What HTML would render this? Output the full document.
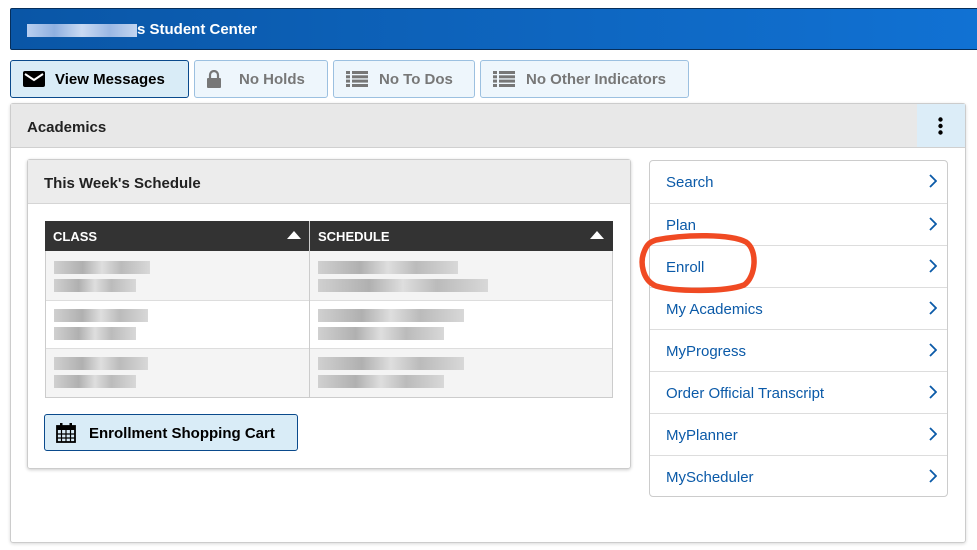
<!DOCTYPE html><html><head><style>
body{margin:0;width:977px;height:550px;background:#fff;font-family:"Liberation Sans",Arial,sans-serif;position:relative;overflow:hidden}
.a{position:absolute;box-sizing:border-box}
.hdr{left:10px;top:8px;width:980px;height:42px;background:linear-gradient(90deg,#0a56a6,#1172d4);border:1px solid #062f5c;border-radius:2px;color:#fff;font-size:15px;font-weight:bold;padding:12px 0 0 16px}
.btn{top:60px;height:38px;border:1px solid #9cc0e0;background:#eef6fc;border-radius:3px;font-size:15px;font-weight:bold;color:#777;display:flex;align-items:center}
.blur{display:inline-block;background:linear-gradient(90deg,#b9cff0,#8fb0e0,#c9daf3,#9bb8e4,#c3d5f0);height:13px;vertical-align:middle}
.g{position:absolute;height:13px;background:linear-gradient(90deg,#d0d0d0,#b0b0b0 30%,#dedede 50%,#bbb 70%,#d8d8d8)}
.li{position:absolute;left:0;width:100%;height:42px;border-top:1px solid #ddd;color:#0b5aa8;font-size:15px;padding:13px 0 0 16px;box-sizing:border-box}
.li:first-child{border-top:none}
.li svg{position:absolute;right:10px;top:13px}
</style></head><body>
<div class="a hdr"><span class="blur" style="width:110px;margin-right:0"></span>s Student Center</div>
<div class="a btn" style="left:10px;width:179px;background:#d9ecf7;border-color:#0a4a8c;color:#000;padding-left:12px"><svg width="22" height="18" viewBox="0 0 22 18"><rect x="0" y="1" width="22" height="16" rx="2" fill="#000"/><path d="M2 4l9 6 9-6" stroke="#fff" stroke-width="2" fill="none"/></svg><span style="margin-left:10px">View Messages</span></div>
<div class="a btn" style="left:194px;width:134px;padding-left:12px"><svg width="14" height="18" viewBox="0 0 14 18"><path d="M3 8V5a4 4 0 0 1 8 0v3" stroke="#777" stroke-width="2.2" fill="none"/><rect x="0" y="8" width="14" height="10" rx="1" fill="#777"/></svg><span style="margin-left:18px">No Holds</span></div>
<div class="a btn" style="left:333px;width:142px;padding-left:12px"><svg width="22" height="16" viewBox="0 0 22 16" fill="#777"><rect x="0" y="0" width="4" height="3"/><rect x="6" y="0" width="16" height="3"/><rect x="0" y="4.3" width="4" height="3"/><rect x="6" y="4.3" width="16" height="3"/><rect x="0" y="8.6" width="4" height="3"/><rect x="6" y="8.6" width="16" height="3"/><rect x="0" y="13" width="4" height="3"/><rect x="6" y="13" width="16" height="3"/></svg><span style="margin-left:11px">No To Dos</span></div>
<div class="a btn" style="left:480px;width:209px;padding-left:12px"><svg width="22" height="16" viewBox="0 0 22 16" fill="#777"><rect x="0" y="0" width="4" height="3"/><rect x="6" y="0" width="16" height="3"/><rect x="0" y="4.3" width="4" height="3"/><rect x="6" y="4.3" width="16" height="3"/><rect x="0" y="8.6" width="4" height="3"/><rect x="6" y="8.6" width="16" height="3"/><rect x="0" y="13" width="4" height="3"/><rect x="6" y="13" width="16" height="3"/></svg><span style="margin-left:11px">No Other Indicators</span></div>

<div class="a" style="left:10px;top:103px;width:956px;height:440px;border:1px solid #ccc;border-radius:3px;box-shadow:0 1px 3px rgba(0,0,0,.15)"></div>
<div class="a" style="left:11px;top:104px;width:906px;height:44px;background:#e8e8e8;border-bottom:1px solid #d0d0d0;font-size:15px;font-weight:bold;color:#222;padding:15px 0 0 16px">Academics</div>
<div class="a" style="left:917px;top:104px;width:48px;height:44px;background:#dcedf8;border-bottom:1px solid #d0d0d0"><svg style="position:absolute;left:21px;top:13px" width="5" height="18"><circle cx="2.5" cy="2.5" r="2.2"/><circle cx="2.5" cy="9" r="2.2"/><circle cx="2.5" cy="15.5" r="2.2"/></svg></div>

<div class="a" style="left:27px;top:159px;width:604px;height:310px;border:1px solid #ccc;border-radius:3px;box-shadow:0 1px 3px rgba(0,0,0,.2)"></div>
<div class="a" style="left:28px;top:160px;width:602px;height:44px;background:#ececec;border-bottom:1px solid #d5d5d5;font-size:15px;font-weight:bold;color:#222;padding:15px 0 0 16px">This Week's Schedule</div>
<div class="a" style="left:45px;top:221px;width:568px;height:177px;border:1px solid #ccc;background:#f4f4f4"></div>
<div class="a" style="left:45px;top:221px;width:568px;height:30px;background:#333"></div>
<div class="a" style="left:309px;top:221px;width:1px;height:177px;background:#ccc"></div>
<div class="a" style="left:53px;top:229px;color:#fff;font-size:13px;font-weight:bold">CLASS</div>
<div class="a" style="left:318px;top:229px;color:#fff;font-size:13px;font-weight:bold">SCHEDULE</div>
<svg class="a" style="left:287px;top:231px" width="14" height="8"><path d="M0 8L7 0 14 8z" fill="#fff"/></svg>
<svg class="a" style="left:590px;top:231px" width="14" height="8"><path d="M0 8L7 0 14 8z" fill="#fff"/></svg>
<div class="a" style="left:46px;top:300px;width:566px;height:49px;background:#fff;border-top:1px solid #ddd;border-bottom:1px solid #ddd"></div>
<div class="a" style="left:309px;top:300px;width:1px;height:49px;background:#ccc"></div>
<div class="g" style="left:54px;top:261px;width:96px"></div><div class="g" style="left:54px;top:279px;width:82px"></div>
<div class="g" style="left:318px;top:261px;width:140px"></div><div class="g" style="left:318px;top:279px;width:170px"></div>
<div class="g" style="left:54px;top:309px;width:94px"></div><div class="g" style="left:54px;top:327px;width:82px"></div>
<div class="g" style="left:318px;top:309px;width:146px"></div><div class="g" style="left:318px;top:327px;width:126px"></div>
<div class="g" style="left:54px;top:357px;width:94px"></div><div class="g" style="left:54px;top:375px;width:82px"></div>
<div class="g" style="left:318px;top:357px;width:146px"></div><div class="g" style="left:318px;top:375px;width:126px"></div>
<div class="a" style="left:44px;top:414px;width:254px;height:37px;background:#d9ecf7;border:1px solid #0a4a8c;border-radius:3px;font-size:15px;font-weight:bold;color:#000;padding:10px 0 0 44px">Enrollment Shopping Cart</div>
<svg class="a" style="left:56px;top:423px" width="20" height="20" viewBox="0 0 20 20"><rect x="1" y="3" width="18" height="16" fill="none" stroke="#000" stroke-width="1.8"/><rect x="1" y="3" width="18" height="4" fill="#000"/><rect x="4" y="0" width="2.5" height="5" fill="#000"/><rect x="13.5" y="0" width="2.5" height="5" fill="#000"/><path d="M1 11h18M1 15h18M5.5 7v12M10 7v12M14.5 7v12" stroke="#000" stroke-width="1.2"/></svg>

<div class="a" style="left:649px;top:160px;width:299px;height:337px;border:1px solid #ccc;border-radius:4px;overflow:hidden">
<div class="li" style="top:0">Search<svg width="8" height="14"><path d="M1 1l6 6-6 6" stroke="#0b5aa8" stroke-width="1.8" fill="none"/></svg></div>
<div class="li" style="top:42px">Plan<svg width="8" height="14"><path d="M1 1l6 6-6 6" stroke="#0b5aa8" stroke-width="1.8" fill="none"/></svg></div>
<div class="li" style="top:84px">Enroll<svg width="8" height="14"><path d="M1 1l6 6-6 6" stroke="#0b5aa8" stroke-width="1.8" fill="none"/></svg></div>
<div class="li" style="top:126px">My Academics<svg width="8" height="14"><path d="M1 1l6 6-6 6" stroke="#0b5aa8" stroke-width="1.8" fill="none"/></svg></div>
<div class="li" style="top:168px">MyProgress<svg width="8" height="14"><path d="M1 1l6 6-6 6" stroke="#0b5aa8" stroke-width="1.8" fill="none"/></svg></div>
<div class="li" style="top:210px">Order Official Transcript<svg width="8" height="14"><path d="M1 1l6 6-6 6" stroke="#0b5aa8" stroke-width="1.8" fill="none"/></svg></div>
<div class="li" style="top:252px">MyPlanner<svg width="8" height="14"><path d="M1 1l6 6-6 6" stroke="#0b5aa8" stroke-width="1.8" fill="none"/></svg></div>
<div class="li" style="top:294px">MyScheduler<svg width="8" height="14"><path d="M1 1l6 6-6 6" stroke="#0b5aa8" stroke-width="1.8" fill="none"/></svg></div>
</div>
<svg class="a" style="left:636px;top:232px" width="124" height="66"><path d="M20 8C50 2 95 2 110 10 122 18 120 45 108 53 90 60 40 60 20 54 6 48 4 30 8 20 11 12 14 10 20 8z" fill="none" stroke="#f04a23" stroke-width="5.5"/></svg>
</body></html>
